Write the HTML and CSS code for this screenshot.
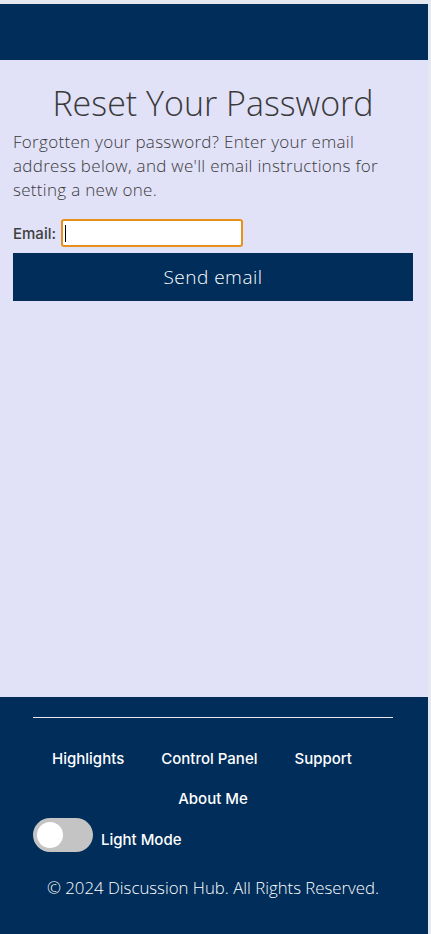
FILE: index.html
```html
<!DOCTYPE html>
<html lang="en">
<head>
<meta charset="utf-8">
<title>Reset Your Password</title>
<link rel="stylesheet" href="styles.css">
</head>
<body>
<div class="page">
  <header class="topbar"></header>
  <main class="content">
    <h1 class="title">Reset Your Password</h1>
    <p class="intro">Forgotten your password? Enter your email address below, and we'll email instructions for setting a new one.</p>
    <form class="reset-form">
      <div class="field">
        <label class="field-label" for="email">Email:</label>
        <span class="input-box" id="email"><span class="caret"></span></span>
      </div>
      <button type="button" class="send-btn">Send email</button>
    </form>
  </main>
  <footer class="footer">
    <div class="rule"></div>
    <nav class="links">
      <div class="links-row links-row-main">
        <a class="link">Highlights</a>
        <a class="link">Control Panel</a>
        <a class="link">Support</a>
      </div>
      <div class="links-row">
        <a class="link">About Me</a>
      </div>
    </nav>
    <div class="mode">
      <span class="toggle"><span class="knob"></span></span>
      <span class="mode-label">Light Mode</span>
    </div>
    <p class="copy">© 2024 Discussion Hub. All Rights Reserved.</p>
  </footer>
</div>
</body>
</html>
```
FILE: styles.css
```css
* { box-sizing: border-box; }
html, body { margin: 0; padding: 0; }
body {
  background: #e6e8f0;
  font-family: "Open Sans", "Liberation Sans", sans-serif;
}
.page {
  width: 428px;
  height: 930px;
  margin-top: 4px;
  display: flex;
  flex-direction: column;
  background: #e1e1f8;
}
.topbar {
  height: 56px;
  flex: none;
  background: #002d5a;
}
.content {
  flex: 1;
  padding: 0 15px 0 13px;
}
.title {
  margin: 21px 0 0;
  text-align: center;
  font-size: 34px;
  font-weight: 300;
  line-height: 44px;
  color: #3a3a3a;
}
.intro {
  margin: 5px 0 0;
  font-size: 17px;
  font-weight: 300;
  line-height: 24px;
  letter-spacing: 0.3px;
  color: #3a3a3a;
}
.reset-form { margin-top: 17px; }
.field {
  display: flex;
  align-items: center;
  gap: 5px;
}
.field-label {
  font-family: Inter, "Liberation Sans", sans-serif;
  font-size: 15px;
  font-weight: 500;
  color: #404040;
}
.input-box {
  width: 182px;
  height: 28px;
  background: #fff;
  border: 2px solid #e8901c;
  border-radius: 3px;
  display: flex;
  align-items: center;
  padding-left: 2px;
}
.caret {
  width: 1px;
  height: 17px;
  background: #000;
}
.send-btn {
  display: block;
  width: 100%;
  height: 48px;
  margin-top: 6px;
  border: 0;
  background: #002d5a;
  color: #fff;
  font-family: "Open Sans", "Liberation Sans", sans-serif;
  font-size: 19px;
  font-weight: 300;
  letter-spacing: 0.5px;
}
.footer {
  height: 237px;
  flex: none;
  background: #002d5a;
  padding: 20px 35px 0 33px;
  color: #fff;
}
.rule {
  height: 1px;
  background: #e6e8f0;
}
.links {
  display: flex;
  flex-direction: column;
  gap: 19px;
  margin-top: 30px;
}
.links-row {
  display: flex;
  justify-content: center;
  gap: 37px;
}
.links-row-main { padding-right: 22px; }
.link {
  font-family: Inter, "Liberation Sans", sans-serif;
  font-size: 15px;
  font-weight: 500;
  line-height: 21px;
  color: #fff;
}
.mode {
  display: flex;
  align-items: center;
  gap: 8px;
  margin-top: 9px;
}
.toggle {
  width: 60px;
  height: 34px;
  border-radius: 17px;
  background: #c4c4c4;
  display: flex;
  align-items: center;
  padding-left: 4px;
}
.knob {
  width: 26px;
  height: 26px;
  border-radius: 50%;
  background: #fff;
}
.mode-label {
  margin-top: 8px;
  font-family: Inter, "Liberation Sans", sans-serif;
  font-size: 15px;
  font-weight: 500;
}
.copy {
  margin: 24px 0 0;
  text-align: center;
  font-size: 16.8px;
  font-weight: 300;
  line-height: 24px;
}
```
